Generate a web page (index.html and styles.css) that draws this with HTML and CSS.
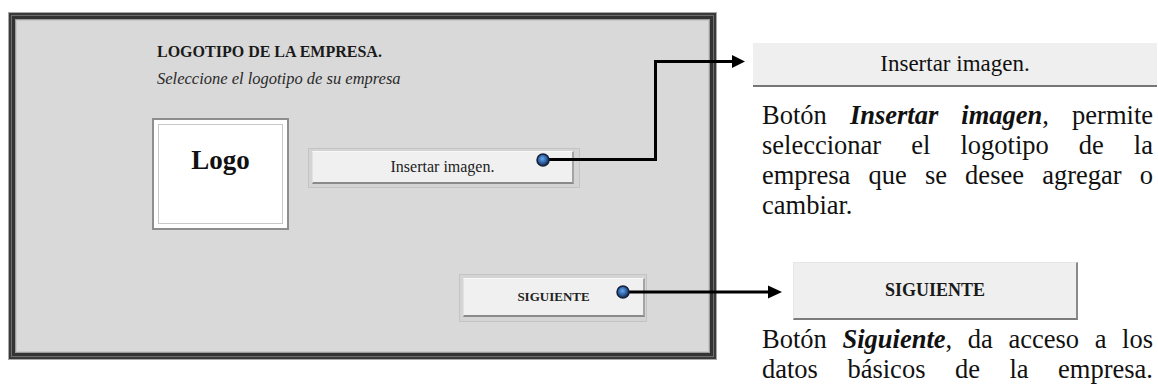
FILE: index.html
```html
<!DOCTYPE html>
<html lang="es">
  <head>
    <meta charset="UTF-8" />
    <meta name="viewport" content="width=device-width, initial-scale=1.0" />
    <title>Logotipo de la empresa</title>
    <link rel="stylesheet" href="styles.css">
  </head>
  <body>
    <div class="page">
      <section class="panel">
        <h1 class="panel-title">LOGOTIPO DE LA EMPRESA.</h1>
        <p class="panel-hint">Seleccione el logotipo de su empresa</p>
        <div class="logo-row">
          <div class="logo-box">
            <div class="logo-inner">Logo</div>
          </div>
          <div class="btn-frame btn-frame--insert">
            <button class="btn btn--insert">Insertar imagen.</button>
          </div>
        </div>
        <div class="next-row">
          <div class="btn-frame btn-frame--next">
            <button class="btn btn--next">SIGUIENTE</button>
          </div>
        </div>
      </section>

      <aside class="notes">
        <div class="demo-bar">Insertar imagen.</div>
        <p class="note">
          <span class="line">Botón <b><i>Insertar imagen</i></b>, permite</span>
          <span class="line">seleccionar el logotipo de la</span>
          <span class="line">empresa que se desee agregar o</span>
          <span class="line line--end">cambiar.</span>
        </p>
        <div class="demo-next">SIGUIENTE</div>
        <p class="note note--short">
          <span class="line">Botón <b><i>Siguiente</i></b>, da acceso a los</span>
          <span class="line">datos básicos de la empresa.</span>
        </p>
      </aside>

      <!-- callout arrows drawn over panel and notes -->
      <svg class="callouts" width="1158" height="392" viewBox="0 0 1158 392">
        <defs>
          <radialGradient id="dot" cx="45%" cy="40%" r="60%">
            <stop offset="0" stop-color="#6aa8ec" />
            <stop offset="0.55" stop-color="#2f64a8" />
            <stop offset="1" stop-color="#14233e" />
          </radialGradient>
        </defs>
        <path d="M543 159.5 H655.5 V61.5 H733" fill="none" stroke="#000" stroke-width="3" />
        <polygon points="732,55 745,61.5 732,68" fill="#000" />
        <circle cx="543" cy="160" r="6" fill="url(#dot)" stroke="#16203a" stroke-width="1.5" />

        <path d="M623 292 H769" fill="none" stroke="#000" stroke-width="3" />
        <polygon points="768,285.5 782,292 768,298.5" fill="#000" />
        <circle cx="623" cy="292" r="6" fill="url(#dot)" stroke="#16203a" stroke-width="1.5" />
      </svg>
    </div>
  </body>
</html>
```

FILE: styles.css
```css
* {
  margin: 0;
  padding: 0;
  box-sizing: border-box;
}
html,
body {
  height: 100%;
}
body {
  overflow: hidden;
  background: #fff;
  color: #111;
  font-family: "Liberation Serif", "Times New Roman", serif;
}
.page {
  position: relative;
  display: flex;
  align-items: flex-start;
  gap: 40px;
  width: 1158px;
  height: 392px;
  padding: 16px 0 0 12px;
}

/* left: the form window */
.panel {
  display: flex;
  flex-direction: column;
  width: 701px;
  height: 340px;
  padding: 24px 0 0 137px;
  background: #d9d9d9;
  border: 3px solid #333;
  box-shadow: 0 0 0 1px #6e6e6e, 0 0 0 3px #3a3a3a, 0 0 0 4px #a8a8a8,
    inset 0 0 0 1px #9c9c9c, inset 0 0 0 2px #c8c8c8;
}
.panel-title {
  margin-left: 5px;
  font-size: 16px;
  font-weight: bold;
  line-height: 18px;
  color: #1a1a1a;
}
.panel-hint {
  margin: 9px 0 0 5px;
  font-size: 16.5px;
  font-style: italic;
  line-height: 18px;
  color: #2a2a2a;
}
.logo-row {
  display: flex;
  align-items: flex-start;
  gap: 19px;
  margin-top: 30px;
}
.logo-box {
  width: 137px;
  height: 112px;
  padding: 4px;
  background: #fff;
  border: 2px solid #8e8e8e;
}
.logo-inner {
  height: 100%;
  padding-top: 20px;
  border: 1px solid #c8c8c8;
  text-align: center;
  font-size: 27px;
  font-weight: bold;
  line-height: 30px;
  color: #111;
}
.btn-frame {
  background: #d4d4d4;
  border: 1px solid #c4c4c4;
}
.btn-frame--insert {
  width: 272px;
  height: 40px;
  margin-top: 30px;
  padding: 2px 5px 3px 3px;
}
.next-row {
  display: flex;
  margin-top: 44px;
  padding-left: 307px;
}
.btn-frame--next {
  width: 188px;
  height: 48px;
  padding: 3px 1px 4px 3px;
}
.btn {
  display: block;
  width: 100%;
  height: 100%;
  font-family: inherit;
  color: #222;
  background: #f0f0f0;
  border: none;
  border-top: 1px solid #f8f8f8;
  border-left: 1px solid #e2e2e2;
  border-right: 2px solid #a4a4a4;
  border-bottom: 2px solid #8a8a8a;
}
.btn--insert {
  font-size: 16px;
}
.btn--next {
  font-size: 13px;
  font-weight: bold;
}

/* right: explanations */
.notes {
  display: flex;
  flex-direction: column;
  width: 404px;
  margin-top: 27px;
}
.demo-bar {
  height: 44px;
  background: #efefef;
  border-bottom: 2px solid #767676;
  text-align: center;
  font-size: 23px;
  line-height: 42px;
  color: #111;
}
.note {
  margin-top: 13px;
  padding: 0 4px 0 9px;
  font-size: 26.5px;
  line-height: 30px;
}
.note .line {
  display: block;
  text-align: justify;
  text-align-last: justify;
}
.note .line--end {
  text-align-last: left;
}
.note--short {
  margin-top: 4px;
}
.demo-next {
  width: 285px;
  height: 58px;
  margin: 42px 0 0 40px;
  background: #efefef;
  border-top: 1px solid #e6e6e6;
  border-left: 1px solid #e6e6e6;
  border-right: 2px solid #8a8a8a;
  border-bottom: 2px solid #7c7c7c;
  text-align: center;
  font-size: 18px;
  font-weight: bold;
  line-height: 55px;
  color: #1a1a1a;
}
.callouts {
  position: absolute;
  top: 0;
  left: 0;
  pointer-events: none;
}
```
